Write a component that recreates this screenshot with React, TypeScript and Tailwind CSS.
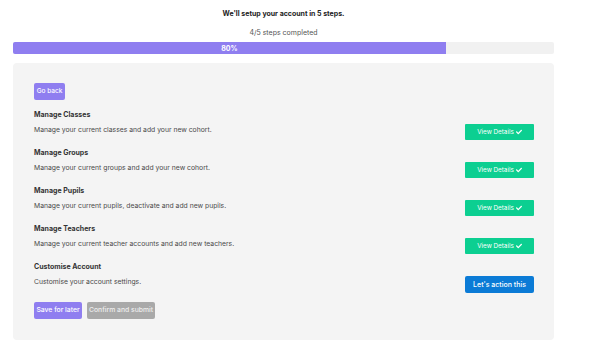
import React from "react";
import { FaCheck } from "react-icons/fa";

const rows = [
  { title: "Manage Classes", desc: "Manage your current classes and add your new cohort.", done: true },
  { title: "Manage Groups", desc: "Manage your current groups and add your new cohort.", done: true },
  { title: "Manage Pupils", desc: "Manage your current pupils, deactivate and add new pupils.", done: true },
  { title: "Manage Teachers", desc: "Manage your current teacher accounts and add new teachers.", done: true },
  { title: "Customise Account", desc: "Customise your account settings.", done: false },
];

export default function App() {
  return (
    <div className="w-[601px] h-[358px] bg-white pt-[8px] pl-[13px]" style={{ fontFamily: "Inter, 'Noto Sans', sans-serif" }}>
      <div className="w-[541px] flex flex-col">
        <div className="h-[12px] leading-[12px] text-center text-[7px] font-bold text-[#222]">We'll setup your account in 5 steps.</div>
        <div className="mt-[7px] h-[12px] leading-[12px] text-center text-[7px] text-[#555]">4/5 steps completed</div>
        <div className="mt-[3px] h-[12px] bg-[#f1f1f1] rounded-[2px] flex">
          <div className="w-[80%] h-full bg-[#8f7ef0] rounded-l-[2px] flex items-center justify-center text-white text-[7px] font-bold leading-none">80%</div>
        </div>
        <div className="mt-[9px] h-[277px] bg-[#f4f4f4] rounded-[4px] pt-[20px] pl-[21px] pr-[20px] flex flex-col">
          <div>
            <button className="h-[17px] w-[31px] bg-[#8f7ef0] rounded-[2px] text-white text-[6.5px] font-medium leading-none flex items-center justify-center">Go back</button>
          </div>
          <div className="mt-[9px] flex flex-col gap-[7px]">
            {rows.map((r) => (
              <div key={r.title} className="flex flex-col">
                <div className="h-[12px] leading-[12px] text-[7px] font-bold text-[#333]">{r.title}</div>
                <div className="mt-[3px] flex items-start justify-between">
                  <div className="h-[12px] leading-[12px] text-[6.8px] text-[#4a4a4a]">{r.desc}</div>
                  {r.done ? (
                    <button className="w-[69px] h-[16px] bg-[#0ccf91] rounded-[1px] text-white text-[6.3px] leading-none flex items-center justify-center gap-[2px]">
                      View Details <FaCheck className="w-[6px] h-[6px]" />
                    </button>
                  ) : (
                    <button className="w-[69px] h-[17px] bg-[#0b7bd6] rounded-[2px] text-white text-[7px] font-medium leading-none flex items-center justify-center">
                      Let's action this
                    </button>
                  )}
                </div>
              </div>
            ))}
          </div>
          <div className="mt-[9px] flex gap-[5px]">
            <button className="h-[17px] w-[48px] bg-[#8f7ef0] rounded-[2px] text-white text-[6.8px] font-medium leading-none flex items-center justify-center">Save for later</button>
            <button className="h-[17px] w-[68px] bg-[#a9a9a9] rounded-[2px] text-[#eeeeee] text-[6.8px] font-medium leading-none flex items-center justify-center">Confirm and submit</button>
          </div>
        </div>
      </div>
    </div>
  );
}
